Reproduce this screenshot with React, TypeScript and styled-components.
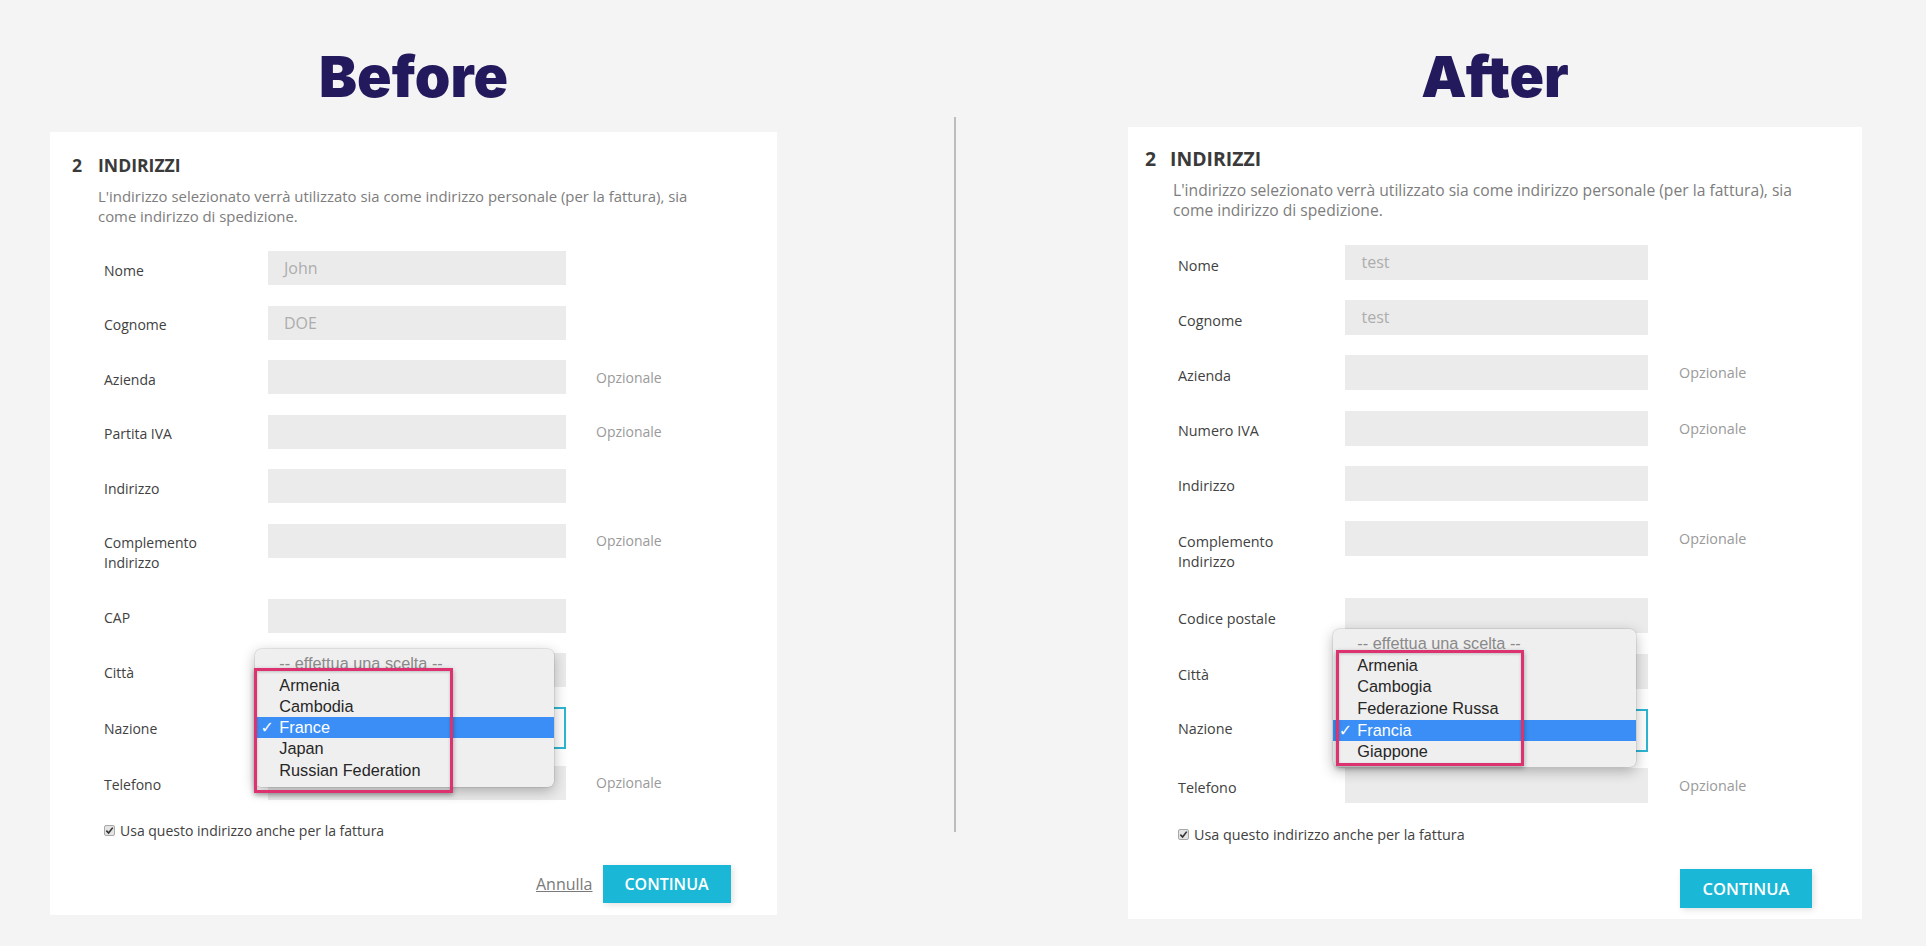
import React from 'react';
import styled, { createGlobalStyle, ThemeProvider } from 'styled-components';

type Cfg = {
  cardW: number;
  cardGap: number;
  padT: number;
  padR: number;
  padB: number;
  padL: number;
  hdrSize: number;
  numW: number;
  descL: number;
  descSize: number;
  descGap: number;
  formGap: number;
  fs: number;
  labelIndent: number;
  labelW: number;
  labelPadT: number;
  labelPadB: number;
  optPadT: number;
  inputW: number;
  inputH: number;
  inputPadL: number;
  rowGap: number;
  tallGap: number;
  postalGap: number;
  optGap: number;
  cittaGap: number;
  selectH: number;
  selectLabelTop: number;
  selectGap: number;
  checkGap: number;
  footerGap: number;
  btnW: number;
  btnH: number;
  btnFs: number;
  popL: number;
  popT: number;
  popW: number;
  pitch: number;
  popPadB: number;
  textL: number;
  checkL: number;
  pinkL: number;
  pinkT: number;
  pinkW: number;
  pinkH: number;
};

const beforeCfg: Cfg = {
  cardW: 727,
  cardGap: 26.4,
  padT: 21.7,
  padR: 46.5,
  padB: 11.8,
  padL: 22,
  hdrSize: 17.6,
  numW: 26,
  descL: 26,
  descSize: 14.9,
  descGap: 9,
  formGap: 25,
  fs: 14,
  labelIndent: 32,
  labelW: 164,
  labelPadT: 9.5,
  labelPadB: 4.5,
  optPadT: 7.5,
  inputW: 298,
  inputH: 34,
  inputPadL: 16,
  rowGap: 20.5,
  tallGap: 21,
  postalGap: 20.5,
  optGap: 30,
  cittaGap: 19.5,
  selectH: 42,
  selectLabelTop: 3,
  selectGap: 17,
  checkGap: 21,
  footerGap: 24,
  btnW: 128,
  btnH: 38.4,
  btnFs: 16,
  popL: -13,
  popT: -58,
  popW: 299,
  pitch: 21.3,
  popPadB: 5.5,
  textL: 24.3,
  checkL: 5.5,
  pinkL: -1,
  pinkT: 19.3,
  pinkW: 199.3,
  pinkH: 124.4,
};

const afterCfg: Cfg = {
  cardW: 734,
  cardGap: 21.4,
  padT: 20,
  padR: 50,
  padB: 11.6,
  padL: 17,
  hdrSize: 19.4,
  numW: 25,
  descL: 28,
  descSize: 15.65,
  descGap: 9,
  formGap: 25.3,
  fs: 14.35,
  labelIndent: 33,
  labelW: 166.5,
  labelPadT: 10.6,
  labelPadB: 4.4,
  optPadT: 8,
  inputW: 303,
  inputH: 35,
  inputPadL: 17,
  rowGap: 20.2,
  tallGap: 22,
  postalGap: 21.3,
  optGap: 31.5,
  cittaGap: 19.5,
  selectH: 43,
  selectLabelTop: 0,
  selectGap: 16,
  checkGap: 22.2,
  footerGap: 24,
  btnW: 132,
  btnH: 38.7,
  btnFs: 16.5,
  popL: -11.8,
  popT: -80,
  popW: 303,
  pitch: 21.7,
  popPadB: 4.2,
  textL: 24.6,
  checkL: 6,
  pinkL: 3.3,
  pinkT: 21,
  pinkW: 188,
  pinkH: 116.7,
};

const GlobalStyle = createGlobalStyle`
  html, body {
    margin: 0;
    padding: 0;
  }
  body {
    background: #f4f4f4;
    font-family: "Open Sans", "Noto Sans", sans-serif;
    width: 1926px;
    height: 946px;
    overflow: hidden;
  }
  * { box-sizing: border-box; }
`;

const Page = styled.div`
  display: flex;
  align-items: flex-start;
  padding-left: 50px;
  height: 946px;
`;

const Column = styled.section<{ $ml?: number }>`
  width: ${(p) => p.theme.cardW}px;
  margin-left: ${(p) => p.$ml ?? 0}px;
  display: flex;
  flex-direction: column;
  align-items: stretch;
  flex-shrink: 0;
`;

const Title = styled.h1`
  margin: 49.3px 0 0;
  height: 56px;
  line-height: 56px;
  font-family: Inter, "Noto Sans", sans-serif;
  font-weight: 900;
  font-size: 57px;
  letter-spacing: 0;
  color: #23195d;
  text-align: center;
`;

const Divider = styled.div`
  width: 2px;
  height: 715px;
  margin-top: 117px;
  margin-left: 177px;
  background: #bcbcbc;
  flex-shrink: 0;
`;

const Card = styled.div`
  margin-top: ${(p) => p.theme.cardGap}px;
  background: #ffffff;
  padding: ${(p) => `${p.theme.padT}px ${p.theme.padR}px ${p.theme.padB}px ${p.theme.padL}px`};
`;

const Header = styled.div`
  display: flex;
  align-items: center;
  height: 24px;
  line-height: 24px;
  font-weight: 700;
  font-size: ${(p) => p.theme.hdrSize}px;
  color: #3a3a3a;
`;

const StepNum = styled.span`
  width: ${(p) => p.theme.numW}px;
`;

const Desc = styled.p`
  margin: ${(p) => p.theme.descGap}px 0 0 ${(p) => p.theme.descL}px;
  font-size: ${(p) => p.theme.descSize}px;
  line-height: 20px;
  color: #7d7d7d;
  white-space: nowrap;
`;

const Form = styled.div`
  margin-top: ${(p) => p.theme.formGap}px;
`;

const Row = styled.div<{ $mb?: number }>`
  display: grid;
  grid-template-columns: ${(p) => p.theme.labelW}px ${(p) => p.theme.inputW}px auto;
  align-items: start;
  padding-left: ${(p) => p.theme.labelIndent}px;
  margin-bottom: ${(p) => p.$mb ?? p.theme.rowGap}px;
`;

const Label = styled.label<{ $extraTop?: number }>`
  max-width: 120px;
  padding: ${(p) => `${p.theme.labelPadT + (p.$extraTop ?? 0)}px 0 ${p.theme.labelPadB}px`};
  line-height: 20px;
  font-size: ${(p) => p.theme.fs}px;
  color: #414141;
`;

const Field = styled.div`
  height: ${(p) => p.theme.inputH}px;
  line-height: ${(p) => p.theme.inputH}px;
  background: #ebebeb;
  padding-left: ${(p) => p.theme.inputPadL}px;
  font-size: 16px;
  color: #adadad;
`;

const SelectBox = styled.div`
  position: relative;
  height: ${(p) => p.theme.selectH}px;
  background: #ffffff;
  border: 2px solid #2db6d3;
`;

const Optional = styled.span`
  margin-left: ${(p) => p.theme.optGap}px;
  padding-top: ${(p) => p.theme.optPadT}px;
  line-height: 20px;
  font-size: ${(p) => p.theme.fs}px;
  color: #9a9a9a;
`;

const Popup = styled.div`
  position: absolute;
  z-index: 2;
  left: ${(p) => p.theme.popL - 2}px;
  top: ${(p) => p.theme.popT - 2}px;
  width: ${(p) => p.theme.popW}px;
  padding: 4.35px 0 ${(p) => p.theme.popPadB}px;
  background: #efefef;
  border-radius: 6px;
  box-shadow: 0 4px 14px rgba(0, 0, 0, 0.28), 0 0 0 0.5px rgba(0, 0, 0, 0.14);
  font-family: "Liberation Sans", Arial, sans-serif;
  font-size: 16.3px;
`;

const Option = styled.div<{ $selected?: boolean; $muted?: boolean }>`
  position: relative;
  height: ${(p) => p.theme.pitch}px;
  line-height: ${(p) => p.theme.pitch}px;
  padding-left: ${(p) => p.theme.textL}px;
  white-space: nowrap;
  background: ${(p) => (p.$selected ? '#3a8ef6' : 'transparent')};
  color: ${(p) => (p.$selected ? '#ffffff' : p.$muted ? '#8a8a8a' : '#262626')};
`;

const Tick = styled.span`
  position: absolute;
  left: ${(p) => p.theme.checkL}px;
  top: 0;
  font-family: "DejaVu Sans", sans-serif;
  font-weight: 700;
  font-size: 16px;
`;

const Highlight = styled.div`
  position: absolute;
  z-index: 3;
  left: ${(p) => p.theme.pinkL}px;
  top: ${(p) => p.theme.pinkT}px;
  width: ${(p) => p.theme.pinkW}px;
  height: ${(p) => p.theme.pinkH}px;
  border: 3.5px solid #dc3270;
  box-shadow: 0 2px 5px rgba(0, 0, 0, 0.35), inset 0 1px 3px rgba(0, 0, 0, 0.2);
  pointer-events: none;
`;

const CheckRow = styled.div`
  display: flex;
  align-items: center;
  height: 20px;
  padding-left: ${(p) => p.theme.labelIndent}px;
  font-size: ${(p) => p.theme.fs}px;
  color: #414141;
`;

const CheckBox = styled.span`
  width: 11px;
  height: 11px;
  margin-right: 5px;
  border: 1px solid #a8a8a8;
  border-radius: 2px;
  background: #e4e4e4;
  display: flex;
  align-items: center;
  justify-content: center;
`;

const Footer = styled.div`
  display: flex;
  justify-content: flex-end;
  align-items: center;
  gap: 10px;
  margin-top: ${(p) => p.theme.footerGap}px;
`;

const CancelLink = styled.a`
  font-size: 16px;
  color: #7a7a7a;
  text-decoration: underline;
`;

const ContinueButton = styled.button`
  width: ${(p) => p.theme.btnW}px;
  height: ${(p) => p.theme.btnH}px;
  border: none;
  background: #1bb7d6;
  color: #ffffff;
  font-family: "Open Sans", sans-serif;
  font-weight: 600;
  font-size: ${(p) => p.theme.btnFs}px;
  text-transform: uppercase;
  box-shadow: 2px 2px 6px rgba(0, 0, 0, 0.12);
`;

type FieldDef = { label: string; value?: string; optional?: boolean; tall?: boolean };

type Variant = {
  cfg: Cfg;
  title: string;
  top: FieldDef[];
  postal: string;
  options: string[];
  selected: number;
  cancel: boolean;
  ml: number;
};

const TickIcon = () => (
  <svg width="9" height="9" viewBox="0 0 10 10">
    <path d="M1.5 5.2 L4 7.8 L8.6 1.8" fill="none" stroke="#333" strokeWidth="1.8" />
  </svg>
);

const AddressCard: React.FC<{ v: Variant }> = ({ v }) => (
  <ThemeProvider theme={v.cfg}>
    <Column $ml={v.ml}>
      <Title>{v.title}</Title>
      <Card>
        <Header>
          <StepNum>2</StepNum>
          <span>INDIRIZZI</span>
        </Header>
        <Desc>
          L'indirizzo selezionato verrà utilizzato sia come indirizzo personale (per la fattura), sia
          <br />
          come indirizzo di spedizione.
        </Desc>
        <Form>
          {v.top.map((f) => (
            <Row key={f.label} $mb={f.tall ? v.cfg.tallGap : undefined}>
              <Label>{f.label}</Label>
              <Field>{f.value ?? ''}</Field>
              {f.optional && <Optional>Opzionale</Optional>}
            </Row>
          ))}
          <Row $mb={v.cfg.postalGap}>
            <Label>{v.postal}</Label>
            <Field />
          </Row>
          <Row $mb={v.cfg.cittaGap}>
            <Label>Città</Label>
            <Field />
          </Row>
          <Row $mb={v.cfg.selectGap}>
            <Label $extraTop={v.cfg.selectLabelTop}>Nazione</Label>
            <SelectBox>
              <Popup>
                <Option $muted>-- effettua una scelta --</Option>
                {v.options.map((o, i) => (
                  <Option key={o} $selected={i === v.selected}>
                    {i === v.selected && <Tick>✓</Tick>}
                    {o}
                  </Option>
                ))}
                <Highlight />
              </Popup>
            </SelectBox>
          </Row>
          <Row $mb={v.cfg.checkGap}>
            <Label>Telefono</Label>
            <Field />
            <Optional>Opzionale</Optional>
          </Row>
          <CheckRow>
            <CheckBox>
              <TickIcon />
            </CheckBox>
            Usa questo indirizzo anche per la fattura
          </CheckRow>
        </Form>
        <Footer>
          {v.cancel && <CancelLink>Annulla</CancelLink>}
          <ContinueButton>Continua</ContinueButton>
        </Footer>
      </Card>
    </Column>
  </ThemeProvider>
);

const before: Variant = {
  cfg: beforeCfg,
  title: 'Before',
  top: [
    { label: 'Nome', value: 'John' },
    { label: 'Cognome', value: 'DOE' },
    { label: 'Azienda', optional: true },
    { label: 'Partita IVA', optional: true },
    { label: 'Indirizzo' },
    { label: 'Complemento Indirizzo', optional: true, tall: true },
  ],
  postal: 'CAP',
  options: ['Armenia', 'Cambodia', 'France', 'Japan', 'Russian Federation'],
  selected: 2,
  cancel: true,
  ml: 0,
};

const after: Variant = {
  cfg: afterCfg,
  title: 'After',
  top: [
    { label: 'Nome', value: 'test' },
    { label: 'Cognome', value: 'test' },
    { label: 'Azienda', optional: true },
    { label: 'Numero IVA', optional: true },
    { label: 'Indirizzo' },
    { label: 'Complemento Indirizzo', optional: true, tall: true },
  ],
  postal: 'Codice postale',
  options: ['Armenia', 'Cambogia', 'Federazione Russa', 'Francia', 'Giappone'],
  selected: 3,
  cancel: false,
  ml: 172,
};

export default function App() {
  return (
    <>
      <GlobalStyle />
      <Page>
        <AddressCard v={before} />
        <Divider />
        <AddressCard v={after} />
      </Page>
    </>
  );
}
